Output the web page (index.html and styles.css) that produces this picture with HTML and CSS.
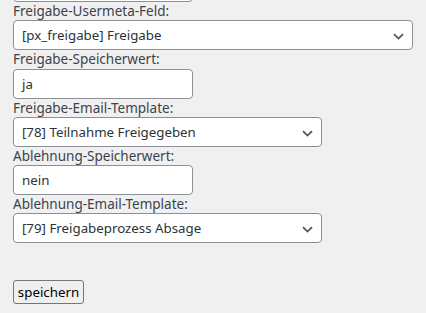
FILE: index.html
```html
<!DOCTYPE html>
<html lang="de">
<head>
<meta charset="utf-8">
<link rel="stylesheet" href="styles.css">
</head>
<body>
<form class="form">
  <div class="box input prev"></div>
  <label class="label">Freigabe-Usermeta-Feld:</label>
  <div class="box select wide">[px_freigabe] Freigabe<svg class="chev" viewBox="0 0 11 7"><path d="M1 1.2 L5.5 5.6 L10 1.2" fill="none" stroke="#50575e" stroke-width="1.8"/></svg></div>
  <label class="label">Freigabe-Speicherwert:</label>
  <div class="box input">ja</div>
  <label class="label">Freigabe-Email-Template:</label>
  <div class="box select mid">[78] Teilnahme Freigegeben<svg class="chev" viewBox="0 0 11 7"><path d="M1 1.2 L5.5 5.6 L10 1.2" fill="none" stroke="#50575e" stroke-width="1.8"/></svg></div>
  <label class="label">Ablehnung-Speicherwert:</label>
  <div class="box input">nein</div>
  <label class="label">Ablehnung-Email-Template:</label>
  <div class="box select mid">[79] Freigabeprozess Absage<svg class="chev" viewBox="0 0 11 7"><path d="M1 1.2 L5.5 5.6 L10 1.2" fill="none" stroke="#50575e" stroke-width="1.8"/></svg></div>
  <div class="actions"><button type="button" class="btn">speichern</button></div>
</form>
</body>
</html>
```
FILE: styles.css
```css
html, body {
  margin: 0;
  padding: 0;
  background: #f0f0f1;
  height: 100%;
  overflow: hidden;
}
body {
  font-family: "Noto Sans", "Open Sans", sans-serif;
  font-size: 13px;
  color: #3c434a;
}
.form {
  display: flex;
  flex-direction: column;
  align-items: flex-start;
  padding-left: 13px;
  margin-top: -28px;
}
.label {
  display: block;
  line-height: 18px;
  height: 18.25px;
  font-size: 13.5px;
}
.box {
  box-sizing: border-box;
  height: 30px;
  border: 1px solid #8c8f94;
  border-radius: 4px;
  background: #fff;
  color: #2c3338;
  font-size: 13.3px;
  line-height: 28px;
  padding: 0 8px;
  position: relative;
  flex-shrink: 0;
}
.input { width: 180px; }
.wide { width: 400px; }
.mid { width: 309px; }
.chev {
  position: absolute;
  right: 8px;
  top: 12px;
  width: 11px;
  height: 7px;
}
.actions {
  margin-top: 37px;
}
.btn {
  font-family: "Noto Sans", "Open Sans", sans-serif;
  font-size: 13.3px;
  color: #000;
  background: #efefef;
  border: 1px solid #767676;
  border-radius: 3px;
  height: 24px;
  width: 71px;
  padding: 0;
  line-height: 20px;
}
```
